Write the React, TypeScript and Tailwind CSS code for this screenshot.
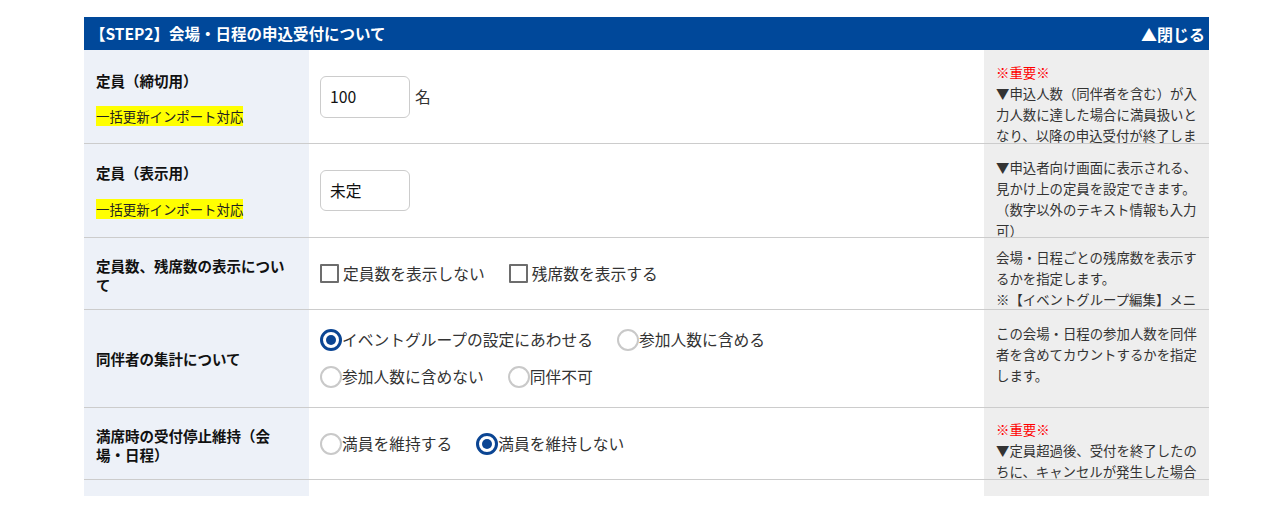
import React from "react";

const FONT = '"Noto Sans CJK JP", "Noto Sans", "Liberation Sans", sans-serif';

function Radio({ checked, label }: { checked?: boolean; label: string }) {
  return (
    <div className="flex items-center">
      {checked ? (
        <span className="flex h-[22px] w-[22px] items-center justify-center rounded-full border-[3px] border-[#0b4593] bg-white">
          <span className="h-[10px] w-[10px] rounded-full bg-[#0b4593]" />
        </span>
      ) : (
        <span className="h-[22px] w-[22px] rounded-full border-2 border-[#c9c9c9] bg-white" />
      )}
      <span className="text-[15.75px] leading-[22px] text-[#333]">{label}</span>
    </div>
  );
}

function Checkbox({ label }: { label: string }) {
  return (
    <div className="flex items-center">
      <span className="h-[19px] w-[19px] rounded-[1px] border-2 border-[#6d6d6d] bg-white" />
      <span className="ml-[4px] text-[15.75px] leading-[22px] text-[#333]">{label}</span>
    </div>
  );
}

function Badge() {
  return (
    <span className="self-start bg-[#ffff00] text-[13.4px] leading-[20px] text-[#222]">
      一括更新インポート対応
    </span>
  );
}

function Label({ children }: { children: React.ReactNode }) {
  return <div className="text-[14.5px] font-bold leading-[19px] text-[#111]">{children}</div>;
}

function Row({
  h,
  left,
  mid,
  note,
  leftClass = "",
  notePt,
  last = false,
}: {
  h: string;
  left: React.ReactNode;
  mid: React.ReactNode;
  note: React.ReactNode;
  leftClass?: string;
  notePt: string;
  last?: boolean;
}) {
  return (
    <div
      className={`grid grid-cols-[225px_675px_225px] ${h} ${
        last ? "" : "border-b border-[#cccccc]"
      }`}
    >
      <div className={`flex flex-col justify-center bg-[#edf1f8] pl-3 pr-4 ${leftClass}`}>{left}</div>
      <div className="flex flex-col justify-center bg-white pl-[11px]">{mid}</div>
      <div className={`overflow-hidden bg-[#eeeeee] pl-3 pr-[8px] ${notePt}`}>
        <div className="text-[13.4px] leading-[21px] text-[#333]">{note}</div>
      </div>
    </div>
  );
}

export default function App() {
  return (
    <div className="min-h-[507px] bg-white pt-[17px]" style={{ fontFamily: FONT }}>
      <div className="ml-[84px] w-[1125px]">
        <div className="flex h-[33px] items-center justify-between bg-[#00489a] pl-[6px] pr-[4px] font-bold text-white">
          <span className="text-[15.5px]">【STEP2】会場・日程の申込受付について</span>
          <span className="text-[16px]">▲閉じる</span>
        </div>

        <Row
          h="h-[94px]"
          leftClass="pt-[4px]"
          left={
            <div className="flex flex-col gap-[16px]">
              <Label>定員（締切用）</Label>
              <Badge />
            </div>
          }
          mid={
            <div className="flex items-center">
              <div className="flex h-[42px] w-[90px] items-center rounded-[6px] border border-[#cccccc] bg-white px-[9px] text-[15.75px] text-[#111]">
                100
              </div>
              <span className="ml-[5px] text-[15.75px] text-[#333]">名</span>
            </div>
          }
          notePt="pt-[12px]"
          note={
            <>
              <div className="text-[#ff0000]">※重要※</div>
              <div>▼申込人数（同伴者を含む）が入力人数に達した場合に満員扱いとなり、以降の申込受付が終了します。</div>
            </>
          }
        />

        <Row
          h="h-[94px]"
          left={
            <div className="flex flex-col gap-[17px]">
              <Label>定員（表示用）</Label>
              <Badge />
            </div>
          }
          mid={
            <div className="flex h-[41px] w-[90px] items-center rounded-[6px] border border-[#cccccc] bg-white px-[9px] text-[15.75px] text-[#111]">
              未定
            </div>
          }
          notePt="pt-[13px]"
          note={<div>▼申込者向け画面に表示される、見かけ上の定員を設定できます。（数字以外のテキスト情報も入力可）</div>}
        />

        <Row
          h="h-[72px]"
          leftClass="pt-[3px]"
          left={<Label>定員数、残席数の表示について</Label>}
          mid={
            <div className="flex items-center gap-[24px]">
              <Checkbox label="定員数を表示しない" />
              <Checkbox label="残席数を表示する" />
            </div>
          }
          notePt="pt-[9px]"
          note={
            <>
              <div>会場・日程ごとの残席数を表示するかを指定します。</div>
              <div>※【イベントグループ編集】メニューの設定が優先されます。</div>
            </>
          }
        />

        <Row
          h="h-[98px]"
          left={<Label>同伴者の集計について</Label>}
          mid={
            <div className="flex flex-col gap-[15px]">
              <div className="flex items-center gap-[24px]">
                <Radio checked label="イベントグループの設定にあわせる" />
                <Radio label="参加人数に含める" />
              </div>
              <div className="flex items-center gap-[24px]">
                <Radio label="参加人数に含めない" />
                <Radio label="同伴不可" />
              </div>
            </div>
          }
          notePt="pt-[13px]"
          note={<div>この会場・日程の参加人数を同伴者を含めてカウントするかを指定します。</div>}
        />

        <Row
          h="h-[72px]"
          leftClass="pt-[3px]"
          left={<Label>満席時の受付停止維持（会場・日程）</Label>}
          mid={
            <div className="flex items-center gap-[24px]">
              <Radio label="満員を維持する" />
              <Radio checked label="満員を維持しない" />
            </div>
          }
          notePt="pt-[11px]"
          note={
            <>
              <div className="text-[#ff0000]">※重要※</div>
              <div>▼定員超過後、受付を終了したのちに、キャンセルが発生した場合でも満員の状態を維持します。</div>
            </>
          }
        />

        <Row h="h-[16px]" last left={null} mid={null} notePt="" note={null} />
      </div>
    </div>
  );
}
